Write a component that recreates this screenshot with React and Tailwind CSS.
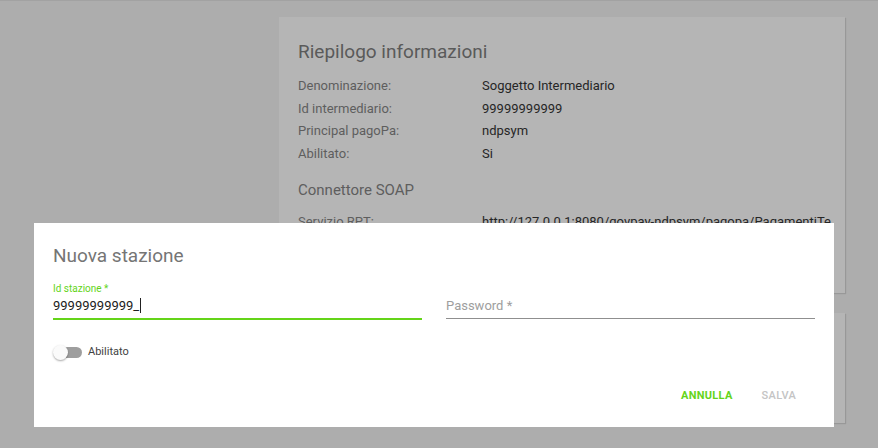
import React from 'react';

const rows = [
    { label: 'Denominazione:', value: 'Soggetto Intermediario' },
    { label: 'Id intermediario:', value: '99999999999' },
    { label: 'Principal pagoPa:', value: 'ndpsym' },
    { label: 'Abilitato:', value: 'Si' },
];

export default function App() {
    return (
        <div className="relative w-[878px] h-[448px] overflow-hidden bg-[#adadad] font-['Roboto',sans-serif]">
            <div className="h-px bg-[#a2a2a2]" />

            {/* page content (dimmed by the backdrop) */}
            <div className="pl-[279px] pt-4 w-[845px]">
                <div className="h-[276px] bg-[#b5b5b5] shadow-[1px_1px_1px_rgba(0,0,0,0.12)] pl-[19px] pt-[23px]">
                    <h2 className="text-[19px] leading-6 text-[#5a5a5a]">Riepilogo informazioni</h2>
                    <div className="mt-[11px] flex flex-col">
                        {rows.map(r => (
                            <div key={r.label} className="flex h-[22.5px] items-center text-[13px] leading-4">
                                <span className="w-[184px] text-[#5e5e5e]">{r.label}</span>
                                <span className="text-[#262626]">{r.value}</span>
                            </div>
                        ))}
                    </div>
                    <h3 className="mt-[16px] text-[15px] leading-[18px] text-[#5e5e5e]">Connettore SOAP</h3>
                    <div className="mt-[15px] flex text-[13px] leading-4">
                        <span className="w-[184px] text-[#5e5e5e]">Servizio RPT:</span>
                        <span className="text-[#262626] whitespace-nowrap">http://127.0.0.1:8080/govpay-ndpsym/pagopa/PagamentiTe</span>
                    </div>
                </div>
                <div className="mt-5 h-[110px] bg-[#b5b5b5] shadow-[1px_1px_1px_rgba(0,0,0,0.12)]" />
            </div>

            {/* dialog */}
            <div className="absolute left-[34px] top-[223px] w-[800px] h-[204px] bg-white px-[19px] pt-[21px]">
                <h1 className="text-[19px] leading-6 text-[#757575]">Nuova stazione</h1>
                <div className="mt-[15px] grid grid-cols-2 gap-6">
                    <div className="flex flex-col">
                        <label className="text-[10px] leading-3 text-[#64d419]">Id stazione *</label>
                        <div className="mt-[2px] h-[17px] flex items-center text-[13px] text-[#212121] border-b-2 border-[#64d419] pb-[4px] box-content">
                            99999999999_<span className="ml-px w-px h-[15px] bg-[#212121]" />
                        </div>
                    </div>
                    <div className="flex flex-col">
                        <div className="h-[12px]" />
                        <div className="mt-[2px] h-[17px] flex items-center text-[13px] text-[#9e9e9e] border-b border-[#8f8f8f] pb-[4px] box-content">
                            Password *
                        </div>
                    </div>
                </div>
                <div className="mt-[24px] flex items-center gap-[6px]">
                    <div className="relative w-[29px] h-[15px] flex items-center">
                        <div className="ml-[3px] w-[26px] h-[11px] rounded-full bg-[#9e9e9e]" />
                        <div className="absolute left-0 top-0 w-[15px] h-[15px] rounded-full bg-[#fafafa] shadow-[0_1px_2px_rgba(0,0,0,0.35)]" />
                    </div>
                    <span className="text-[11px] text-[#424242]">Abilitato</span>
                </div>
                <div className="mt-[27px] flex justify-end gap-[29px] pr-[19px]">
                    <button className="text-[11px] font-bold text-[#64d419] tracking-[0.3px]">ANNULLA</button>
                    <button className="text-[11px] font-medium text-[#c4c4c4] tracking-[0.3px]">SALVA</button>
                </div>
            </div>
        </div>
    );
}
